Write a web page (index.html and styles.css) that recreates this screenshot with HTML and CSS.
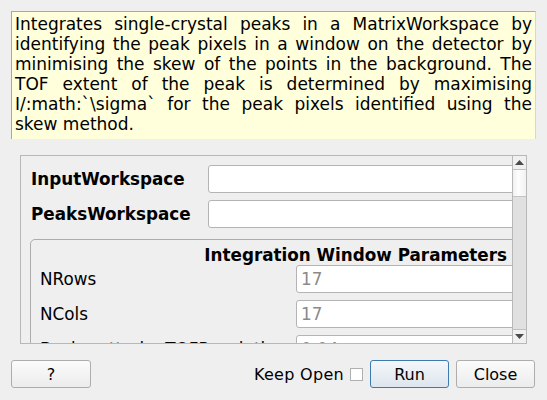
FILE: index.html
```html
<!DOCTYPE html>
<html>
<head>
<meta charset="utf-8">
<link rel="stylesheet" href="styles.css">
</head>
<body>
<div class="desc">Integrates single-crystal peaks in a MatrixWorkspace by identifying the peak pixels in a window on the detector by minimising the skew of the points in the background. The TOF extent of the peak is determined by maximising I/:math:`\sigma` for the peak pixels identified using the skew method.</div>

<div class="scroll">
  <div class="viewport">
    <div class="content">
      <div class="row">
        <div class="label bold">InputWorkspace</div>
        <div class="input"></div>
      </div>
      <div class="row">
        <div class="label bold">PeaksWorkspace</div>
        <div class="input"></div>
      </div>
      <div class="group">
        <div class="group-title">Integration Window Parameters</div>
        <div class="grow">
          <div class="glabel">NRows</div>
          <div class="input val">17</div>
        </div>
        <div class="grow">
          <div class="glabel">NCols</div>
          <div class="input val">17</div>
        </div>
        <div class="grow">
          <div class="glabel">BackscatteringTOFResolution</div>
          <div class="input val">0.04</div>
        </div>
      </div>
    </div>
  </div>
  <div class="vscroll">
    <div class="arrow up"><svg width="9" height="5" viewBox="0 0 9 5"><path d="M0 5 L4.5 0 L9 5 Z" fill="#4a4a4a"/></svg></div>
    <div class="handle"></div>
    <div class="track"></div>
    <div class="arrow down"><svg width="9" height="5" viewBox="0 0 9 5"><path d="M0 0 L4.5 5 L9 0 Z" fill="#4a4a4a"/></svg></div>
  </div>
</div>

<div class="buttons">
  <div class="btn help">?</div>
  <div class="spacer"></div>
  <div class="keep">Keep Open</div>
  <div class="check"></div>
  <div class="btn run">Run</div>
  <div class="btn close">Close</div>
</div>
</body>
</html>
```
FILE: styles.css
```css
* { box-sizing: border-box; }
html, body {
  margin: 0;
  padding: 0;
  background: #efefef;
  font-family: "DejaVu Sans", sans-serif;
  font-size: 16px;
  color: #000;
  width: 547px;
  height: 400px;
  overflow: hidden;
}
.desc {
  margin: 11px 11px 0 11px;
  height: 128px;
  background: #ffffdc;
  border-top: 1px solid #a8a8a8;
  border-left: 1px solid #a8a8a8;
  border-right: 1px solid #d8d8d0;
  padding: 2px 3px 0 3px;
  font-size: 17px;
  line-height: 20px;
  text-align: justify;
}
.scroll {
  margin: 16px 0 0 20px;
  width: 507px;
  height: 189px;
  border: 1px solid #b8b8b8;
  display: flex;
}
.viewport {
  width: 491px;
  height: 187px;
  overflow: hidden;
}
.content {
  width: 530px;
  padding: 9px 0 0 9px;
  font-size: 16.8px;
}
.row {
  display: flex;
  align-items: center;
  height: 28px;
  margin-bottom: 7px;
}
.label {
  width: 178px;
  padding-left: 1px;
}
.bold { font-weight: bold; }
.input {
  flex: 1;
  height: 28px;
  background: #fff;
  border: 1px solid #b4b4b4;
  border-radius: 3px;
}
.group {
  margin-top: 11px;
  border: 1px solid #acacac;
  border-radius: 5px;
  padding: 5px 0 0 9px;
  height: 200px;
}
.group-title {
  font-weight: bold;
  text-align: right;
  padding-right: 43px;
  line-height: 20px;
}
.grow {
  display: flex;
  align-items: center;
  height: 28px;
  margin-bottom: 7px;
}
.glabel {
  width: 256px;
}
.val {
  color: #8a8a8a;
  padding-left: 4px;
  line-height: 26px;
}
.vscroll {
  width: 14px;
  height: 187px;
  border-left: 1px solid #b8b8b8;
  display: flex;
  flex-direction: column;
  background: #e0e0e0;
}
.arrow {
  height: 14px;
  background: #f0f0f0;
  display: flex;
  align-items: center;
  justify-content: center;
}
.arrow.up { border-bottom: 1px solid #c0c0c0; }
.arrow.down { border-top: 1px solid #c0c0c0; }
.handle {
  height: 27px;
  background: linear-gradient(to right, #f0f0f0, #fdfdfd 40%, #f2f2f2);
  border-bottom: 1px solid #c4c4c4;
}
.track { flex: 1; background: #e0e0e0; }
.buttons {
  display: flex;
  align-items: center;
  margin-top: 16px;
  padding: 0 12px 0 11px;
  height: 28px;
}
.btn {
  width: 79px;
  height: 28px;
  border: 1px solid #adadad;
  border-radius: 3px;
  background: linear-gradient(#fbfbfb, #ececec);
  display: flex;
  align-items: center;
  justify-content: center;
}
.help { width: 80px; }
.spacer { flex: 1; }
.keep { margin-right: 6px; letter-spacing: 0.3px; }
.check {
  width: 13px;
  height: 13px;
  border: 1px solid #b0b0b0;
  background: #fff;
  margin-right: 7px;
}
.run {
  border-color: #3d7ab0;
  background: linear-gradient(#f4f7fa, #dde5ed);
  margin-right: 7px;
}
```
